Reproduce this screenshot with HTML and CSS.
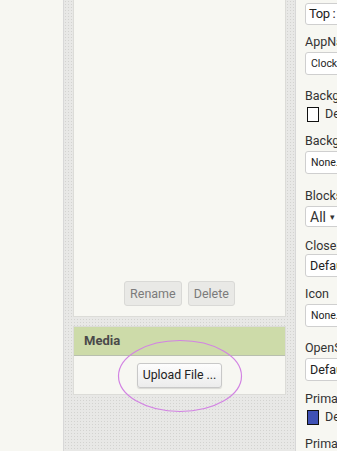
FILE: index.html
```html
<!DOCTYPE html>
<html>
  <head>
    <meta charset="utf-8" />
    <title>Designer</title>
    <link rel="stylesheet" href="styles.css">
  </head>
  <body>
    <div class="page">
      <div class="viewer-side"></div>

      <div class="center-column">
        <div class="panel components">
          <div class="component-buttons">
            <button class="btn btn-disabled">Rename</button>
            <button class="btn btn-disabled">Delete</button>
          </div>
        </div>

        <div class="panel media">
          <div class="panel-header">Media</div>
          <div class="panel-body">
            <button class="btn btn-upload">Upload File ...</button>
            <svg class="highlight" width="126" height="74" viewBox="0 0 126 74">
              <ellipse cx="63" cy="37" rx="61.5" ry="35.5" fill="none" stroke="#d283e3" stroke-width="1.2"/>
            </svg>
          </div>
        </div>
      </div>

      <div class="properties">
        <div class="textbox top-box">Top :</div>

        <div class="prop-label">AppName</div>
        <div class="textbox">Clock</div>

        <div class="prop-label">BackgroundColor</div>
        <div class="swatch-row"><span class="swatch white"></span>Default</div>

        <div class="prop-label">BackgroundImage</div>
        <div class="textbox loose">None...</div>

        <div class="prop-label">BlocksToolkit</div>
        <div class="dropdown">All <span class="caret">&#9662;</span></div>

        <div class="prop-label">CloseScreenAnimation</div>
        <div class="textbox big compact">Default</div>

        <div class="prop-label">Icon</div>
        <div class="textbox">None...</div>

        <div class="prop-label">OpenScreenAnimation</div>
        <div class="textbox big tight">Default</div>

        <div class="prop-label">PrimaryColor</div>
        <div class="swatch-row"><span class="swatch blue"></span>Default</div>

        <div class="prop-label">PrimaryColorDark</div>
      </div>
    </div>
  </body>
</html>
```

FILE: styles.css
```css
body {
  margin: 0;
  font-family: Roboto, 'Liberation Sans', Arial, sans-serif;
  background-color: #f7f7f2;
  color: #333;
  overflow: hidden;
}
.page {
  display: flex;
  height: 451px;
}
.viewer-side {
  width: 63px;
  flex: none;
}
.center-column {
  width: 213px;
  flex: none;
  padding: 0 9px 0 9px;
  border-left: 1px solid #d8d8d8;
  border-right: 1px solid #d8d8d8;
  background-color: #e8e8e6;
  background-image: radial-gradient(circle, #d3d3d0 0.7px, transparent 0.9px);
  background-size: 3px 3px;
}
.panel {
  background-color: #f7f7f2;
  border: 1px solid #dcdcd8;
}
.components {
  height: 316px;
  border-top: none;
  display: flex;
  flex-direction: column;
  justify-content: flex-end;
}
.component-buttons {
  display: flex;
  justify-content: center;
  gap: 6px;
  padding-bottom: 10px;
}
.btn {
  font-family: Roboto, 'Liberation Sans', Arial, sans-serif;
  font-size: 12.5px;
  border-radius: 3px;
  padding: 0 5px;
  height: 25px;
}
.btn-disabled {
  color: #7b7b7b;
  background-color: #e9e9e6;
  border: 1px solid #d9d9d6;
}
.media {
  margin-top: 9px;
}
.panel-header {
  height: 28px;
  line-height: 28px;
  padding-left: 10px;
  background-color: #cddba9;
  border-bottom: 1px solid #b8bfae;
  font-weight: 700;
  font-size: 13px;
  color: #4a4a4a;
}
.panel-body {
  position: relative;
  height: 38px;
  display: flex;
  align-items: center;
  justify-content: center;
}
.btn-upload {
  color: #222;
  background: linear-gradient(#fdfdfd, #ececec);
  border: 1px solid #c8c8c8;
  box-shadow: 0 1px 1px rgba(0, 0, 0, 0.12);
  padding: 0 5px;
  font-size: 12.3px;
}
.highlight {
  position: absolute;
  left: 43px;
  top: -17px;
}
.properties {
  flex: 1;
  min-width: 0;
  overflow: hidden;
  padding-left: 9px;
  padding-top: 3px;
  font-size: 12.5px;
}
.prop-label {
  height: 16px;
  line-height: 16px;
  color: #333;
  white-space: nowrap;
}
.textbox {
  width: 200px;
  height: 23px;
  line-height: 21px;
  box-sizing: border-box;
  margin: 2px 0 13px 0;
  border: 1px solid #cfcfcf;
  border-radius: 3px;
  background-color: #fff;
  padding-left: 5px;
  font-size: 10.5px;
  color: #222;
  white-space: nowrap;
}
.textbox.big {
  font-size: 12.5px;
  padding-left: 4px;
}
.top-box {
  margin: 0 0 9px 0;
  height: 22px;
  line-height: 20px;
  font-size: 13px;
  letter-spacing: -0.4px;
  padding-left: 3px;
}
.textbox.loose {
  margin-bottom: 14px;
}
.textbox.compact {
  margin: 0 0 9px 0;
}
.textbox.tight {
  margin-bottom: 10px;
}
.swatch-row {
  height: 16px;
  line-height: 16px;
  margin: 2px 0 11px 2px;
  display: flex;
  align-items: center;
  white-space: nowrap;
}
.swatch {
  flex: none;
  width: 10px;
  height: 13px;
  border: 1px solid #111;
  margin-right: 6px;
}
.swatch.white {
  background-color: #fff;
}
.swatch.blue {
  background-color: #3f51b5;
}
.dropdown {
  display: flex;
  align-items: center;
  gap: 4px;
  width: fit-content;
  height: 21px;
  box-sizing: border-box;
  margin: 2px 0 11px 0;
  padding: 0 6px 0 4px;
  border: 1px solid #cfcfcf;
  border-radius: 3px;
  background-color: #fff;
  font-size: 14px;
}
.caret {
  font-size: 9px;
}
```
